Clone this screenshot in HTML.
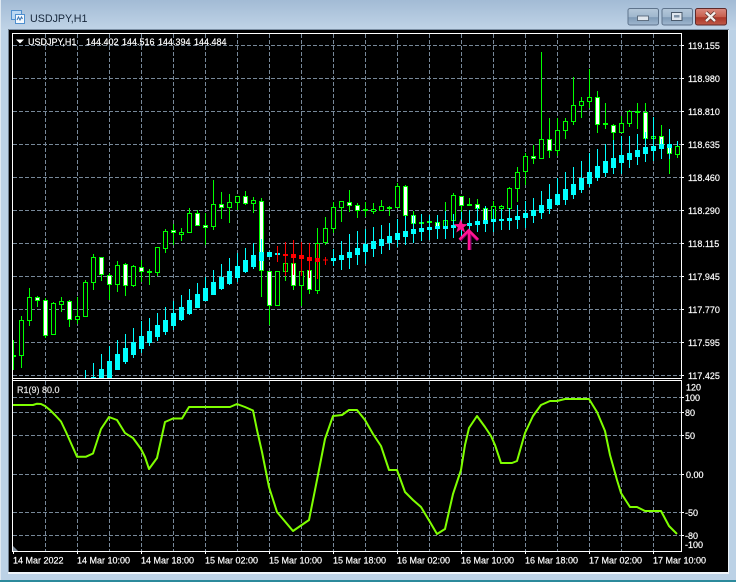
<!DOCTYPE html>
<html><head><meta charset="utf-8"><title>USDJPY,H1</title>
<style>
html,body{margin:0;padding:0;width:736px;height:582px;overflow:hidden;background:#bcd2e6}
svg{display:block}
text{font-family:"Liberation Sans",sans-serif;font-size:9px;fill:#fff;stroke:#fff;stroke-width:.18px}
</style></head><body>
<svg width="736" height="582" viewBox="0 0 736 582" xmlns="http://www.w3.org/2000/svg">
<defs>
<linearGradient id="tb" x1="0" y1="0" x2="0" y2="1"><stop offset="0" stop-color="#a2bbd5"/><stop offset="1" stop-color="#c0d4e7"/></linearGradient>
<linearGradient id="bb" x1="0" y1="0" x2="0" y2="1"><stop offset="0" stop-color="#b5c8da"/><stop offset=".5" stop-color="#a0b7ce"/><stop offset=".55" stop-color="#7f9ab6"/><stop offset="1" stop-color="#a0b8d0"/></linearGradient>
<linearGradient id="rb" x1="0" y1="0" x2="0" y2="1"><stop offset="0" stop-color="#d98b80"/><stop offset=".5" stop-color="#c8604f"/><stop offset=".55" stop-color="#ab3628"/><stop offset="1" stop-color="#c05a48"/></linearGradient>
<clipPath id="m"><rect x="13" y="34" width="668" height="344"/></clipPath>
</defs>
<rect width="736" height="582" fill="#bcd2e6"/>
<rect width="736" height="30" fill="url(#tb)"/>
<rect x="0" y="0" width="1" height="580" fill="#dfe9f2"/>
<rect x="0" y="580" width="736" height="2" fill="#2c8a9c"/>
<rect x="8" y="29" width="721" height="1" fill="#7a8ea3"/>
<rect x="8" y="29" width="1" height="544" fill="#6f7f8f"/>
<rect x="9" y="30" width="719" height="542" fill="#000"/>
<rect x="728" y="30" width="1" height="543" fill="#eef4f9"/>
<rect x="8" y="572" width="721" height="2" fill="#eef4f9"/>

<!-- title icon -->
<rect x="11.500" y="10.500" width="10" height="9" fill="#bcd8f2" stroke="#4f8fce"/>
<rect x="15.500" y="14.500" width="9" height="9" fill="#f4f9fe" stroke="#4f8fce"/>
<path d="M17 20l1.500-3 1.500 3 1.500-3 1 2" fill="none" stroke="#3a74b0"/>
<text x="30" y="22" style="font-size:10.700px;fill:#16263a;stroke:none">USDJPY,H1</text>

<!-- window buttons -->
<rect x="628" y="8.500" width="30.500" height="16.500" rx="2" fill="url(#bb)" stroke="#5f748c"/>
<rect x="637.500" y="16" width="11" height="4.500" fill="#dfe6ee" stroke="#4a5a6c" stroke-width=".8"/>
<rect x="662" y="8.500" width="30.500" height="16.500" rx="2" fill="url(#bb)" stroke="#5f748c"/>
<rect x="671.500" y="12.500" width="10.500" height="8" fill="#dfe6ee" stroke="#4a5a6c"/>
<rect x="674" y="15" width="5.500" height="2.500" fill="#7f93a8"/>
<rect x="695.500" y="8.500" width="31" height="16.500" rx="2" fill="url(#rb)" stroke="#5e2a2a"/>
<path d="M706 12.500l9 8.500M715 12.500l-9 8.500" stroke="#55302c" stroke-width="3.800"/>
<path d="M706 12.500l9 8.500M715 12.500l-9 8.500" stroke="#f4f0ee" stroke-width="2.400"/>

<!-- grid -->
<g stroke="#778899" stroke-width="1" stroke-dasharray="4 2" fill="none">
<path d="M13 45.500H681M13 78.500H681M13 111.500H681M13 144.500H681M13 177.500H681M13 210.500H681M13 243.500H681M13 276.500H681M13 309.500H681M13 342.500H681M13 375.500H681"/>
<path d="M45.500 34V378M77.500 34V378M109.500 34V378M141.500 34V378M173.500 34V378M205.500 34V378M237.500 34V378M269.500 34V378M301.500 34V378M333.500 34V378M365.500 34V378M397.500 34V378M429.500 34V378M461.500 34V378M493.500 34V378M525.500 34V378M557.500 34V378M589.500 34V378M621.500 34V378M653.500 34V378"/>
<path d="M13 397.500H681M13 412.500H681M13 435.500H681M13 474.500H681M13 512.500H681M13 535.500H681"/>
<path d="M45.500 381V551M77.500 381V551M109.500 381V551M141.500 381V551M173.500 381V551M205.500 381V551M237.500 381V551M269.500 381V551M301.500 381V551M333.500 381V551M365.500 381V551M397.500 381V551M429.500 381V551M461.500 381V551M493.500 381V551M525.500 381V551M557.500 381V551M589.500 381V551M621.500 381V551M653.500 381V551"/>
</g>

<g clip-path="url(#m)">
<!-- green wicks -->
<path fill="none" stroke="#00ff00" stroke-width="1" d="M13.500 340V370M21.500 316V368M29.500 288V326M37.500 296V307M45.500 298V338M53.500 302V335M61.500 297V312M69.500 300V327M77.500 297V324M85.500 280V317M93.500 254V290M101.500 257V281M109.500 273V300M117.500 261V292M125.500 263V296M133.500 265V287M141.500 260V282M149.500 269V285M157.500 247V276M165.500 229V253M173.500 224V245M181.500 228V241M189.500 208V233M197.500 210V226M205.500 213V245M213.500 180V230M221.500 192V219M229.500 194V223M237.500 196V210M245.500 191V205M253.500 197V213M261.500 198V297M269.500 271V325M277.500 271V306M285.500 263V281M293.500 263V290M301.500 271V306M309.500 270V294M317.500 228V294M325.500 217V245M333.500 202V233M341.500 201V222M349.500 190V212M357.500 203V218M365.500 202V217M373.500 203V214M381.500 200V211M389.500 206V216M397.500 183V208M405.500 185V216M413.500 211V224M421.500 214V223M429.500 216V224M437.500 220V229M445.500 202V239M453.500 193V221M461.500 196V212M469.500 198V205M477.500 199V213M485.500 206V222M493.500 201V222M501.500 205V209M509.500 187V209M517.500 167V202M525.500 153V185M533.500 145V164M541.500 52V159M549.500 118V158M557.500 118V156M565.500 118V139M573.500 77V125M581.500 97V118M589.500 69V108M597.500 91V133M605.500 103V129M613.500 124V140M621.500 116V133M629.500 110V127M637.500 103V129M645.500 103V139M653.500 117V139M661.500 125V148M669.500 147V174M677.500 141V158"/>
<!-- hollow bodies -->
<path fill="#000" stroke="#00ff00" stroke-width="1" d="M19.500 320.500h4v35h-4zM27.500 297.500h4v23h-4zM51.500 303.500h4v31h-4zM59.500 301.500h4v3h-4zM75.500 316.500h4v3h-4zM83.500 282.500h4v34h-4zM91.500 257.500h4v25h-4zM115.500 265.500h4v19h-4zM131.500 266.500h4v19h-4zM155.500 247.500h4v25h-4zM163.500 231.500h4v17h-4zM179.500 232.500h4v2h-4zM187.500 213.500h4v19h-4zM211.500 204.500h4v22h-4zM227.500 202.500h4v5h-4zM235.500 196.500h4v6h-4zM251.500 200.500h4v3h-4zM275.500 271.500h4v34h-4zM283.500 263.500h4v8h-4zM299.500 271.500h4v14h-4zM315.500 243.500h4v47h-4zM323.500 228.500h4v14h-4zM331.500 207.500h4v21h-4zM339.500 201.500h4v6h-4zM371.500 209.500h4v2h-4zM379.500 206.500h4v4h-4zM395.500 186.500h4v21h-4zM443.500 220.500h4v8h-4zM451.500 195.500h4v25h-4zM491.500 206.500h4v15h-4zM499.500 206.500h4v2h-4zM507.500 188.500h4v20h-4zM515.500 172.500h4v16h-4zM523.500 156.500h4v15h-4zM539.500 139.500h4v19h-4zM555.500 130.500h4v20h-4zM563.500 121.500h4v9h-4zM571.500 105.500h4v16h-4zM579.500 101.500h4v4h-4zM587.500 97.500h4v4h-4zM619.500 123.500h4v9h-4zM627.500 111.500h4v12h-4zM651.500 136.500h4v2h-4zM675.500 146.500h4v8h-4z"/>
<!-- white bodies -->
<path fill="#fff" stroke="#00ff00" stroke-width="1" d="M35.500 297.500h4v3h-4zM43.500 300.500h4v35h-4zM67.500 301.500h4v18h-4zM99.500 257.500h4v17h-4zM107.500 275.500h4v9h-4zM123.500 264.500h4v21h-4zM139.500 267.500h4v4h-4zM171.500 230.500h4v2h-4zM195.500 213.500h4v12h-4zM203.500 225.500h4v2h-4zM219.500 204.500h4v3h-4zM243.500 196.500h4v7h-4zM259.500 201.500h4v69h-4zM267.500 271.500h4v34h-4zM291.500 263.500h4v22h-4zM307.500 270.500h4v19h-4zM347.500 202.500h4v3h-4zM355.500 205.500h4v5h-4zM403.500 186.500h4v29h-4zM411.500 215.500h4v8h-4zM435.500 222.500h4v6h-4zM459.500 196.500h4v9h-4zM475.500 204.500h4v4h-4zM483.500 208.500h4v12h-4zM531.500 156.500h4v2h-4zM547.500 139.500h4v11h-4zM595.500 97.500h4v27h-4zM611.500 125.500h4v7h-4zM643.500 112.500h4v26h-4zM659.500 136.500h4v12h-4zM667.500 147.500h4v6h-4z"/>
<!-- crosses -->
<path fill="#00ff00" d="M11 355h5v2h-5zM147 271h5v2h-5zM363 209h5v2h-5zM387 207h5v2h-5zM419 222h5v2h-5zM427 221h5v2h-5zM467 204h5v2h-5zM603 123h5v2h-5zM635 111h5v2h-5z"/>
<!-- cyan wicks -->
<path fill="none" stroke="#00ffff" stroke-width="1" d="M85.500 370V378M93.500 363V378M101.500 354V378M109.500 346V378M117.500 340V370M125.500 334V364M133.500 328V358M141.500 321V353M149.500 318V346M157.500 313V341M165.500 307V335M173.500 301V330M181.500 295V321M189.500 289V315M197.500 283V308M205.500 277V301M213.500 270V295M221.500 264V290M229.500 258V285M237.500 253V282M245.500 248V273M253.500 243V269M261.500 239V270M269.500 252V257M333.500 249V266M341.500 241V270M349.500 234V269M357.500 231V265M365.500 229V264M373.500 227V257M381.500 225V254M389.500 223V250M397.500 219V247M405.500 216V245M413.500 215V243M421.500 214V241M429.500 215V240M437.500 215V239M445.500 211V239M453.500 214V238M461.500 212V236M469.500 210V236M477.500 207V232M485.500 206V232M493.500 209V232M501.500 209V230M509.500 208V230M517.500 205V229M525.500 201V228M533.500 198V223M541.500 191V219M549.500 184V214M557.500 178V205M565.500 172V205M573.500 167V199M581.500 161V193M589.500 153V187M597.500 149V181M605.500 144V177M613.500 140V174M621.500 136V174M629.500 136V168M637.500 134V165M645.500 132V162M653.500 117V161M661.500 139V159M669.500 129V159M677.500 141V146"/>
<!-- cyan bodies -->
<path fill="#00ffff" d="M91 377h5v1h-5zM99 369h5v9h-5zM107 361h5v17h-5zM115 354h5v16h-5zM123 348h5v14h-5zM131 342h5v13h-5zM139 336h5v13h-5zM147 331h5v12h-5zM155 325h5v12h-5zM163 320h5v12h-5zM171 313h5v13h-5zM179 307h5v13h-5zM187 300h5v14h-5zM195 294h5v14h-5zM203 288h5v13h-5zM211 282h5v13h-5zM219 277h5v12h-5zM227 271h5v13h-5zM235 266h5v12h-5zM243 260h5v12h-5zM251 255h5v12h-5zM259 252h5v9h-5zM267 252h5v5h-5zM275 253h5v2h-5zM331 258h5v3h-5zM339 255h5v5h-5zM347 252h5v6h-5zM355 248h5v7h-5zM363 244h5v8h-5zM371 241h5v8h-5zM379 239h5v7h-5zM387 236h5v7h-5zM395 233h5v7h-5zM403 231h5v6h-5zM411 229h5v5h-5zM419 228h5v4h-5zM427 227h5v3h-5zM435 226h5v3h-5zM443 226h5v3h-5zM451 225h5v3h-5zM459 225h5v2h-5zM467 223h5v3h-5zM475 221h5v4h-5zM483 220h5v4h-5zM491 219h5v3h-5zM499 219h5v2h-5zM507 218h5v3h-5zM515 216h5v4h-5zM523 213h5v5h-5zM531 210h5v6h-5zM539 205h5v8h-5zM547 199h5v10h-5zM555 194h5v11h-5zM563 189h5v11h-5zM571 184h5v11h-5zM579 178h5v12h-5zM587 172h5v12h-5zM595 166h5v12h-5zM603 161h5v12h-5zM611 158h5v10h-5zM619 155h5v8h-5zM627 153h5v7h-5zM635 150h5v7h-5zM643 147h5v7h-5zM651 146h5v5h-5zM659 144h5v5h-5zM667 144h5v4h-5z"/>
<!-- red -->
<path fill="none" stroke="#ff0000" stroke-width="1" d="M277.500 246V262M285.500 242V276M293.500 240V275M301.500 242V276M309.500 243V278M317.500 244V279M325.500 257V265"/>
<path fill="#ff0000" d="M283 254h5v2h-5zM291 254h5v4h-5zM299 255h5v4h-5zM307 257h5v4h-5zM315 258h5v4h-5zM323 259.500h5v1h-5z"/>
<!-- star + arrow -->
<path fill="#ff1493" d="M460.700 219l1.800 5 5.300.2-4.200 3.200 1.500 5.100-4.400-3-4.400 3 1.500-5.100-4.200-3.200 5.300-.2z"/>
<path fill="none" stroke="#7a0060" stroke-width="3" d="M460 240.500l8.700-9.500 9.300 9.500"/>
<path fill="none" stroke="#7a0060" stroke-width="3" d="M470 233V250"/>
<path fill="none" stroke="#ff1493" stroke-width="2.600" d="M459.500 239.500l9.200-9.200 9.300 9.200"/>
<path fill="none" stroke="#ff1493" stroke-width="2.600" d="M469 231V250"/>
</g>

<!-- RSI -->
<path fill="none" stroke="#7fff00" stroke-width="2" stroke-linejoin="round" d="M13 405H33L37 403.700 41 404 45 406 50 410 55 415 61 421.500 66 432 70 441 77 456.700H86L93 453.500 101 429 109 417 117 420 125 433 133 438 141 449 145 457 149 469 157 458 165 422 173 418.500H182L189 407H230L237 404 245 407 253 410.500 257 430 262 452 269 487 277 512 293 531 309 520 317 480 325 439 333 416 342 415 349 410H357L365 420 373 434 381 446 389 470H397L405 492 413 500 421 507 430 522 437 534 445 529 453 494 461 470 465 445 469 428 477 416 485 427 491 436 495 445 501 463H512L517 461 521 447 525 433 533 416 541 405 550 401H557L565 399H589L597 412 605 431 610 455 617 480 621 493 630 507H637L645 511H661L669 526 677 534"/>

<!-- frame lines -->
<path fill="none" stroke="#fff" stroke-width="1" d="M12.500 33V551.500M12 33.500H681.500V378.500H12M12 380.500H681.500V551.500H12M681.500 380V551"/>
<path fill="#7f8c99" d="M13 546l5 5h-5z"/>

<!-- price ticks -->
<path fill="none" stroke="#fff" stroke-width="1" d="M681 45.500h3M681 78.500h3M681 111.500h3M681 144.500h3M681 177.500h3M681 210.500h3M681 243.500h3M681 276.500h3M681 309.500h3M681 342.500h3M681 375.500h3M681 397.500h3M681 412.500h3M681 435.500h3M681 474.500h3M681 512.500h3M681 535.500h3M13.500 551v3M77.500 551v3M141.500 551v3M205.500 551v3M269.500 551v3M333.500 551v3M397.500 551v3M461.500 551v3M525.500 551v3M589.500 551v3M653.500 551v3"/>

<!-- labels -->
<path fill="#fff" d="M16 39.500h8l-4 4z"/>
<text x="28" y="45">USDJPY,H1</text>
<text x="86" y="45">144.402</text>
<text x="122" y="45">144.516</text>
<text x="158" y="45">144.394</text>
<text x="194" y="45">144.484</text>
<text x="17" y="393" style="fill:#e6e6e6;stroke:#e6e6e6">R1(9) 80.0</text>
<text x="688" y="49">119.155</text>
<text x="688" y="82">118.980</text>
<text x="688" y="115">118.810</text>
<text x="688" y="148">118.635</text>
<text x="688" y="181">118.460</text>
<text x="688" y="214">118.290</text>
<text x="688" y="247">118.115</text>
<text x="688" y="280">117.945</text>
<text x="688" y="313">117.770</text>
<text x="688" y="346">117.595</text>
<text x="688" y="379">117.425</text>
<text x="686" y="390.500">120</text>
<text x="685" y="401">100</text>
<text x="685" y="416">80</text>
<text x="685" y="439">50</text>
<text x="686" y="478">0.00</text>
<text x="685" y="516">-50</text>
<text x="685" y="539">-80</text>
<text x="685" y="548">-100</text>
<text x="13" y="563.500">14 Mar 2022</text>
<text x="77" y="563.500">14 Mar 10:00</text>
<text x="141" y="563.500">14 Mar 18:00</text>
<text x="205" y="563.500">15 Mar 02:00</text>
<text x="269" y="563.500">15 Mar 10:00</text>
<text x="333" y="563.500">15 Mar 18:00</text>
<text x="397" y="563.500">16 Mar 02:00</text>
<text x="461" y="563.500">16 Mar 10:00</text>
<text x="525" y="563.500">16 Mar 18:00</text>
<text x="589" y="563.500">17 Mar 02:00</text>
<text x="653" y="563.500">17 Mar 10:00</text>
</svg>
</body></html>
